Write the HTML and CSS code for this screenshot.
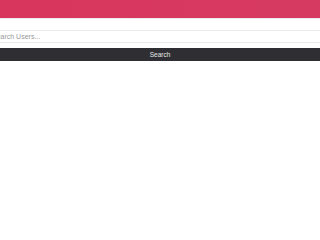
FILE: index.html
```html
<!DOCTYPE html>
<html>
<head>
<meta charset="utf-8">
<link rel="stylesheet" href="styles.css">
</head>
<body>
<header class="topbar"></header>
<form class="search">
  <div class="field">
    <input class="input" type="text" placeholder="Search Users...">
  </div>
  <button class="btn" type="button">Search</button>
</form>
</body>
</html>
```
FILE: styles.css
```css
html, body {
  margin: 0;
  padding: 0;
  background: #fff;
  font-family: "Liberation Sans", Arial, sans-serif;
  overflow: hidden;
}
.topbar {
  height: 18px;
  background: linear-gradient(90deg, #d9365d, #d63a60);
  border-bottom: 1px solid #ececf0;
}
.search {
  display: flex;
  flex-direction: column;
}
.field {
  padding-top: 11px;
}
.input {
  display: block;
  box-sizing: border-box;
  width: 100%;
  height: 13px;
  margin: 0;
  padding: 0;
  text-indent: -8px;
  border: none;
  border-top: 1px solid #ececf0;
  border-bottom: 1px solid #ececf0;
  font-family: "Liberation Sans", Arial, sans-serif;
  font-size: 7px;
  color: #555;
  outline: none;
  background: #fff;
}
.input::placeholder {
  color: #999;
}
.btn {
  display: block;
  margin-top: 5px;
  height: 13px;
  border: none;
  padding: 0;
  background: #2f2f33;
  color: #e8e8e8;
  font-family: "Liberation Sans", Arial, sans-serif;
  font-size: 6.5px;
  text-align: center;
}
```
